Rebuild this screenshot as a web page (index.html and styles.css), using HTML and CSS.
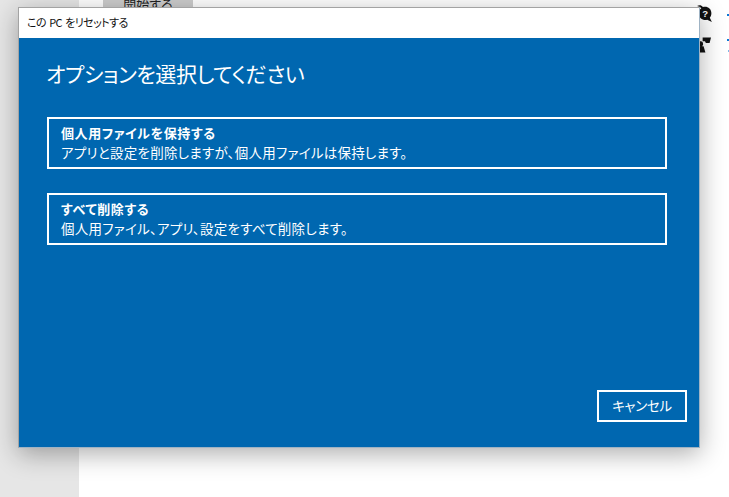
FILE: index.html
```html
<!DOCTYPE html>
<html lang="ja">
<head>
<meta charset="utf-8">
<title>この PC をリセットする</title>
<link rel="stylesheet" href="styles.css">
</head>
<body>
<div class="page">
  <aside class="sidebar"></aside>
  <main class="content">
    <div class="start-btn">開始する</div>
  </main>
</div>
<svg class="help-icon" viewBox="0 0 14 17" aria-hidden="true"><path d="M0 1C2 0 4 0 5.500 2C9 0.500 13.500 3 13.500 7.500C13.500 9.500 13 11 12 12L14 16L9.500 14C5.500 15 1.500 12 1.500 8C1.500 6 2.500 4 4 3C3 2 2 1.500 0 1Z" fill="#111"/><text x="7.600" y="11.500" class="help-mark">?</text></svg>
<svg class="people-icon" viewBox="0 0 14 17" aria-hidden="true"><path d="M5 1H14L12.500 7H8.500L7.500 5H5Z" fill="#111"/><path d="M1.500 5.500C3.500 4.500 5.500 5.500 5.500 8C5.500 9 5 10 4 10.500H6L8 17H0V11L2.500 10.500C1.500 9 1 7 1.500 5.500Z" fill="#111"/></svg>
<div class="edge-link edge-link-a"></div>
<div class="edge-link edge-link-b"></div>
<div class="edge-link edge-link-c"></div>
<section class="dialog">
  <header class="titlebar">この PC をリセットする</header>
  <div class="body">
    <h1 class="heading">オプションを選択してください</h1>
    <div class="options">
      <button class="option">
        <span class="option-title">個人用ファイルを保持する</span>
        <span class="option-desc">アプリと設定を削除しますが、個人用ファイルは保持します。</span>
      </button>
      <button class="option">
        <span class="option-title">すべて削除する</span>
        <span class="option-desc">個人用ファイル、アプリ、設定をすべて削除します。</span>
      </button>
    </div>
    <footer class="footer"><button class="cancel">キャンセル</button></footer>
  </div>
</section>
</body>
</html>
```
FILE: styles.css
```css
* { box-sizing: border-box; }
html, body { margin: 0; height: 100%; overflow: hidden; background: #fff; }
body { font-family: "Noto Sans CJK JP", "Noto Sans", sans-serif; position: relative; font-feature-settings: "palt"; }
.page { display: flex; height: 497px; }
.sidebar { width: 79px; background: #e6e6e6; }
.content { flex: 1; padding-left: 24px; }
.start-btn { width: 90px; height: 8px; background: #cccccc; color: #222; font-size: 13px; line-height: 8px; text-align: center; overflow: hidden; }
.help-icon { position: absolute; left: 697px; top: 5px; width: 15px; height: 18px; }
.help-mark { font: bold 9px "Liberation Sans", sans-serif; fill: #fff; text-anchor: middle; }
.people-icon { position: absolute; left: 698px; top: 36px; width: 13px; height: 17px; }
.edge-link { position: absolute; background: #0a78d7; height: 2px; }
.edge-link-a { left: 727px; top: 14px; width: 2px; }
.edge-link-b { left: 727px; top: 39px; width: 2px; }
.edge-link-c { left: 728px; top: 50px; width: 1px; background: #7db9ea; }
.dialog { position: absolute; left: 18px; top: 7px; width: 682px; height: 441px; display: flex; flex-direction: column; border: 1px solid #a3a3a3; border-right-color: #9fb3c4; border-bottom-color: #9fb3c4; background: #fff; box-shadow: 0 6px 24px rgba(0,0,0,.32); }
.titlebar { height: 30px; flex: none; padding: 0 0 0 8px; font-size: 11px; letter-spacing: -0.55px; word-spacing: 1.2px; line-height: 29px; color: #111; background: #fff; }
.body { flex: 1; display: flex; flex-direction: column; background: #0067b0; padding: 0 12px 0 28px; color: #fff; }
.heading { margin: 19px 0 0 -1px; font-size: 21px; letter-spacing: -0.4px; font-weight: 400; line-height: 32px; height: 32px; }
.options { display: flex; flex-direction: column; gap: 24px; margin-top: 28px; width: 620px; }
.option { display: flex; flex-direction: column; justify-content: center; height: 52px; padding: 0 0 1px 12px; background: transparent; border: 2px solid #fff; color: #fff; font-family: inherit; font-feature-settings: inherit; text-align: left; }
.option-title { font-size: 13px; letter-spacing: 0.6px; font-weight: 700; line-height: 18px; }
.option-desc { font-size: 13.5px; letter-spacing: 0.25px; line-height: 20px; font-weight: 400; }
.footer { margin-top: auto; display: flex; justify-content: flex-end; padding-bottom: 25px; }
.cancel { width: 90px; height: 32px; background: transparent; border: 2px solid #fff; color: #fff; font-family: inherit; font-feature-settings: inherit; font-size: 13.5px; letter-spacing: -0.3px; padding: 0 0 2px; }
```
